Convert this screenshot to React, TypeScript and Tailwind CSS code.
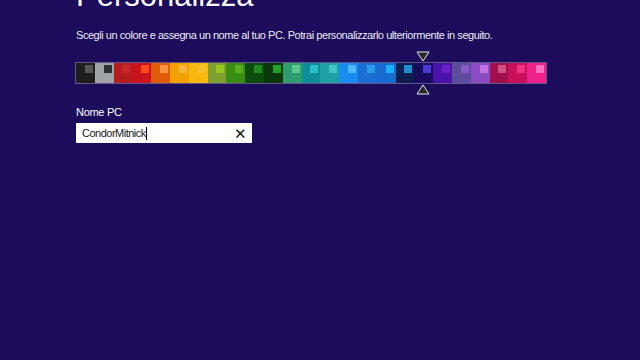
import React from 'react';

// Windows 8 style "Personalizza" setup screen
const swatches: [string, string][] = [
  ['#1e1e1e', '#565656'],
  ['#a0a4a8', '#2e3236'],
  ['#b41c20', '#cc262a'],
  ['#c8141a', '#ff4a1e'],
  ['#e05c08', '#ff9442'],
  ['#f0a000', '#f8b640'],
  ['#f8b810', '#f8c22e'],
  ['#7ea030', '#98c61e'],
  ['#3a8c10', '#54b222'],
  ['#0c4c0c', '#1e8c22'],
  ['#0a380a', '#22a226'],
  ['#2e9e70', '#5ec88c'],
  ['#0e8e98', '#2ac0c8'],
  ['#1ca0a4', '#40c4c6'],
  ['#1a8cf0', '#52b8ff'],
  ['#1a6ed2', '#2c98ea'],
  ['#166ad0', '#1cb0ff'],
  ['#0b1e50', '#1e8cd0'],
  ['#1a0c5c', '#4a3ad6'],
  ['#4a12a8', '#6a22c6'],
  ['#5c4c9c', '#8a5cc6'],
  ['#8a4cc0', '#c072e0'],
  ['#a0104c', '#d05080'],
  ['#c8105a', '#f03282'],
  ['#f0208a', '#ff72c2'],
];

const SELECTED = 18;

function Arrow({ up }: { up?: boolean }) {
  return (
    <svg width="14" height="11" viewBox="0 0 14 11">
      <polygon
        points={up ? '7,1 13,10 1,10' : '1,1 13,1 7,10'}
        fill="#262626"
        stroke="#e8e8e8"
        strokeWidth="1"
        strokeLinejoin="round"
      />
    </svg>
  );
}

export default function App() {
  return (
    <div
      className="w-[640px] h-[360px] overflow-hidden bg-[#1c0c5b] text-white pl-[76px]"
      style={{ fontFamily: '"Liberation Sans", Arial, sans-serif' }}
    >
      {/* Title, mostly scrolled off the top */}
      <h1 className="text-[31px] leading-[31px] font-light -mt-[20px]">Personalizza</h1>

      <p className="mt-[17px] text-[11px] leading-[14px] tracking-[-0.45px] text-white/95">
        Scegli un colore e assegna un nome al tuo PC. Potrai personalizzarlo ulteriormente in seguito.
      </p>

      {/* Colour strip */}
      <div className="mt-[21px] w-[470px] h-[20px] flex ring-1 ring-white/30">
        {swatches.map(([bg, accent], i) => (
          <div
            key={i}
            className="relative flex-1 flex justify-end items-start pt-[2px] pr-[2px]"
            style={{ backgroundColor: bg }}
          >
            <div className="w-[8px] h-[8px]" style={{ backgroundColor: accent }} />
            {i === SELECTED && (
              <>
                <div className="absolute -top-[12px] left-[2px]">
                  <Arrow />
                </div>
                <div className="absolute -bottom-[12px] left-[2px]">
                  <Arrow up />
                </div>
              </>
            )}
          </div>
        ))}
      </div>

      {/* Name field */}
      <div className="mt-[22px] text-[11px] leading-[14px] tracking-[-0.3px]">Nome PC</div>
      <div className="mt-[4px] w-[176px] h-[20px] bg-white flex items-center pl-[6px] pr-[5px]">
        <span className="text-[11px] tracking-[-0.5px] text-[#1a1a1a]">CondorMitnick</span>
        <span className="w-px h-[13px] bg-black" />
        <span className="ml-auto text-[#111] text-[15px] leading-none">✕</span>
      </div>
    </div>
  );
}
